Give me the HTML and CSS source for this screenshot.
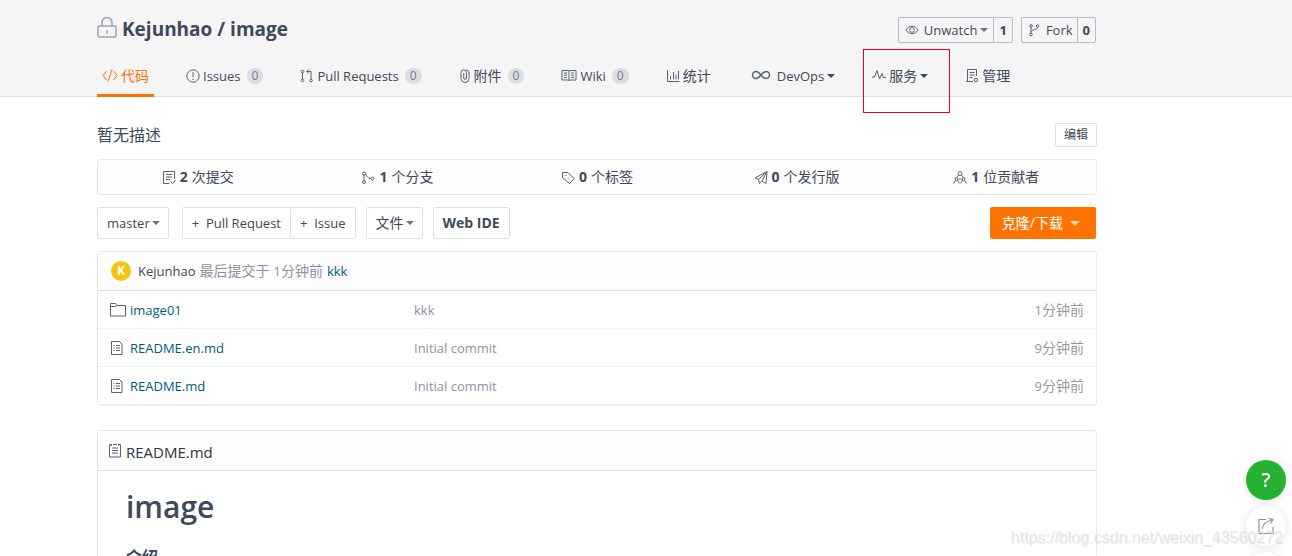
FILE: index.html
```
<!DOCTYPE html>
<html lang="zh-CN">
<head>
<meta charset="utf-8">
<title>Kejunhao / image</title>
<link rel="stylesheet" href="styles.css">
</head>
<body>
<header class="top">
  <div class="wrap">
    <div class="title-row">
      <h1 class="repo">
        <svg class="lock" viewBox="0 0 20 22"><rect x="1" y="9" width="18" height="11" rx="1.500"/><path d="M5 9V5.500a5 5 0 0 1 10 0V9M10 13v4"/></svg>
        <span><a href="#">Kejunhao</a> / <a href="#">image</a></span>
      </h1>
      <div class="actions">
        <div class="pair">
          <button class="pair-main"><svg class="ic eye" viewBox="0 0 14 14"><path d="M1 7c3-5 9-5 12 0-3 5-9 5-12 0z"/><circle cx="7" cy="7" r="2.300"/></svg>Unwatch<i class="caret"></i></button>
          <a class="pair-num" href="#">1</a>
        </div>
        <div class="pair">
          <button class="pair-main fork"><svg class="ic" viewBox="0 0 14 14"><circle cx="4" cy="3" r="1.300"/><circle cx="4" cy="11.500" r="1.300"/><circle cx="10.500" cy="3" r="1.300"/><path d="M4 4.300v6M10.500 4.300c0 3-6.500 1.500-6.500 5"/></svg>Fork</button>
          <a class="pair-num" href="#">0</a>
        </div>
      </div>
    </div>
    <nav class="tabs">
      <a class="tab active" href="#"><svg class="ic wide" viewBox="0 0 16 14"><path d="M4.500 2L1 6.500 4.500 11M11.500 2L15 6.500 11.500 11M10 .5L6 12.500"/></svg><span class="cn">代码</span></a>
      <a class="tab" href="#"><svg class="ic" viewBox="0 0 14 14"><circle cx="7" cy="7" r="6.200"/><path d="M7 3.200v5M7 9.700v1.300"/></svg>Issues<span class="badge">0</span></a>
      <a class="tab" href="#"><svg class="ic" viewBox="0 0 14 14"><circle cx="2.500" cy="2.500" r="1.300"/><circle cx="2.500" cy="11.500" r="1.300"/><circle cx="11" cy="11.500" r="1.300"/><path d="M2.500 3.800v6.400M11 10.200V2.500H7M8.700.5l-2 2 2 2"/></svg>Pull Requests<span class="badge">0</span></a>
      <a class="tab" href="#"><svg class="ic narrow" viewBox="0 0 12 14"><path d="M10 3.500v6a4 4 0 0 1-8 0V3.500a2.700 2.700 0 0 1 5.400 0V9A1.300 1.300 0 0 1 4.700 9V4M10 4a2.500 2.500 0 0 0-3-2.800"/></svg><span class="cn">附件</span><span class="badge">0</span></a>
      <a class="tab" href="#"><svg class="ic wide" viewBox="0 0 16 14"><path d="M1 1.500h6l1 .6 1-.6h6V11H9l-1 .6-1-.6H1zM8 2.100v9M3 4h3M3 6.200h3M3 8.500h3M10 4h3M10 6.200h3M10 8.500h3"/></svg>Wiki<span class="badge">0</span></a>
      <a class="tab" href="#"><svg class="ic" viewBox="0 0 14 14"><path d="M1.500 1v11.500H13.500M4.500 10.500V7M7.500 10.500V3M10 10.500V5.500M12.500 10.500V2"/></svg><span class="cn">统计</span></a>
      <a class="tab devops" href="#"><svg class="ic infinity" viewBox="0 0 20 14"><path d="M10 6C8 3.500 6.500 2.500 5 2.500a3.500 3.500 0 0 0 0 7c1.500 0 3-1 5-3.500s3.500-3.500 5-3.500a3.500 3.500 0 0 1 0 7c-1.500 0-3-1-5-3.500z"/></svg>DevOps<i class="caret"></i></a>
      <a class="tab marked" href="#"><svg class="ic" viewBox="0 0 14 14"><path d="M0 8h2.500L5 1.500 7.500 10 10 4.500l1.500 4H14"/></svg><span class="cn">服务</span><i class="caret"></i></a>
      <a class="tab" href="#"><svg class="ic" viewBox="0 0 14 14"><path d="M11.500 7V.5h-9v12H8M1 12.500h7M4.500 3.500h5M4.500 6h5M4.500 8.500h3"/><circle cx="11" cy="11" r="1.700"/></svg><span class="cn">管理</span></a>
    </nav>
  </div>
</header>
<main class="wrap">
  <div class="desc"><span>暂无描述</span><button class="btn edit">编辑</button></div>
  <div class="stats">
    <a href="#"><svg class="ic" viewBox="0 0 14 14"><path d="M12.500 9V1.500h-11v12h6M4 4.500h6M4 7h6M4 9.500h4M8.500 11.500l2 2 3-3.500"/></svg><b>2</b>次提交</a>
    <a href="#"><svg class="ic" viewBox="0 0 14 14"><circle cx="3" cy="3.500" r="1.500"/><circle cx="3" cy="12" r="1.500"/><circle cx="11.500" cy="8.500" r="1.500"/><path d="M3 5v5.500M4.500 4c1.500 3 2.500 4.500 5.500 4.500"/></svg><b>1</b>个分支</a>
    <a href="#"><svg class="ic" viewBox="0 0 14 14"><path d="M1.500 2.500h5.500l6 6L8.500 13.500l-7-6zM4.500 5.500h1"/></svg><b>0</b>个标签</a>
    <a href="#"><svg class="ic" viewBox="0 0 14 14"><path d="M13 1.500l-12 6.500 3.500 1.500zl-1 12-4-2.500L13 1.500M4.500 9.500l1 4 2-2.500"/></svg><b>0</b>个发行版</a>
    <a href="#"><svg class="ic" viewBox="0 0 14 14"><circle cx="7" cy="3.500" r="2"/><path d="M5.500 5L3.500 7.500M8.500 5l2 2.500M1 13.500c0-2 1-3 2.500-3S6 11.500 6 13.500M8 13.500c0-2 1-3 2.500-3s2.500 1 2.500 3M5.500 10L7 8.500 8.500 10"/><circle cx="3.500" cy="9" r="1.500"/><circle cx="10.500" cy="9" r="1.500"/></svg><b>1</b>位贡献者</a>
  </div>
  <div class="toolbar">
    <button class="btn">master<i class="caret"></i></button>
    <div class="group"><button class="btn">+&nbsp; Pull Request</button><button class="btn">+&nbsp; Issue</button></div>
    <button class="btn"><span class="cn">文件</span><i class="caret"></i></button>
    <button class="btn strong">Web IDE</button>
    <button class="clone">克隆/下载<i class="caret"></i></button>
  </div>
  <section class="panel">
    <div class="commit"><span class="avatar">K</span><a href="#">Kejunhao</a><span class="muted cn">最后提交于</span><span class="muted">1<span class="cn">分钟前</span></span><a class="link" href="#">kkk</a></div>
    <table class="files">
      <tr><td class="name"><a href="#"><svg class="ic wide" viewBox="0 0 16 14"><path d="M.5 13V.5h5l1.500 2h8.500V13zM1 3.500h4.500l1.500-1"/></svg>image01</a></td><td>kkk</td><td class="time">1<span class="cn">分钟前</span></td></tr>
      <tr><td class="name"><a href="#"><svg class="ic" viewBox="0 0 14 14"><path d="M1.500.5H9.500L12 3v10.500H1.500zM3.500 4.500h1M6 4.500h4M3.500 7h1M6 7h4M3.500 9.500h1M6 9.500h4"/></svg>README.en.md</a></td><td>Initial commit</td><td class="time">9<span class="cn">分钟前</span></td></tr>
      <tr><td class="name"><a href="#"><svg class="ic" viewBox="0 0 14 14"><path d="M1.500.5H9.500L12 3v10.500H1.500zM3.500 4.500h1M6 4.500h4M3.500 7h1M6 7h4M3.500 9.500h1M6 9.500h4"/></svg>README.md</a></td><td>Initial commit</td><td class="time">9<span class="cn">分钟前</span></td></tr>
    </table>
  </section>
  <section class="panel readme">
    <div class="readme-head"><svg class="ic" viewBox="0 0 14 14"><path d="M3 .5H1.500v12.500h11V.5H11M5 .5h4M3.500 0v2M10.500 0v2M4 4h6M4 6.500h6M4 9h6"/></svg>README.md</div>
    <article class="doc"><h2>image</h2><h3>介绍</h3></article>
  </section>
</main>
<aside class="float">
  <button class="round help" aria-label="帮助">?</button>
  <button class="round" aria-label="分享"><svg class="share" viewBox="0 0 18 18"><path d="M9 2.500H2v14h14V10M5 12c1-5 4-8 10-9M11.500 1.500l4.500 1-2.500 4"/></svg></button>
  <button class="round" aria-label="顶部"></button>
</aside>
<div class="watermark">https://blog.csdn.net/weixin_43560272</div>
</body>
</html>
```
FILE: styles.css
```
* { box-sizing: border-box; }
html, body { height: 100%; }
body { margin: 0; overflow: hidden; background: #fff; color: #40485b; font: 13px/20px "Open Sans", "Noto Sans CJK SC", sans-serif; }
a { color: inherit; text-decoration: none; }
button { font: inherit; color: inherit; margin: 0; cursor: pointer; }
h1, h2, h3 { margin: 0; }
.cn { font-size: 14px; }
.wrap { max-width: 1000px; margin: 0 97px; }
.top { background: #f5f5f5; border-bottom: 1px solid #dcddde; }
.title-row { display: flex; justify-content: space-between; align-items: center; padding-top: 15px; height: 44px; }
.repo { display: flex; align-items: center; gap: 5px; font-size: 19px; line-height: 26px; font-weight: 700; }
.repo span { margin-bottom: 2px; }
.lock { width: 20px; height: 22px; margin-bottom: 3px; fill: none; stroke: #9ba3b3; stroke-width: 1.5; }
.actions { display: flex; gap: 8px; margin-right: 1px; }
.pair { display: flex; height: 26px; border: 1px solid #b9bdc9; border-radius: 2px; }
.pair-main { display: flex; align-items: center; gap: 5px; padding: 0 5px 0 6px; border: 0; background: none; }
.pair-main.fork { padding: 0 4px 0 5px; }
.pair-num { padding: 2px 5px; border-left: 1px solid #b9bdc9; font-weight: 700; }
.ic { flex: none; width: 14px; height: 14px; fill: none; stroke: #596175; stroke-width: 1; }
.ic.wide { width: 16px; }
.ic.narrow { width: 12px; }
.ic.infinity { width: 20px; stroke-width: 1.5; margin-right: 3px; }
.caret { flex: none; width: 0; height: 0; border: 4px solid transparent; border-top-color: #6b7283; border-bottom: 0; }
.pair .caret { margin-left: -2px; }
.tabs { display: flex; height: 52px; gap: 27px; }
.tab { display: flex; align-items: center; gap: 3px; height: 53px; padding: 16px 5px 6px; white-space: nowrap; }
.tab .caret { border-top-color: #40485b; }
.tab.active { color: #fe7300; border-bottom: 3px solid #fe7300; padding-bottom: 3px; }
.tab.active .ic { stroke: #fe7300; }
.badge { margin-left: 3px; padding: 0 5px; border-radius: 8px; background: #dcdde0; color: #6e7b9b; font-size: 12px; line-height: 16px; }
.devops { margin-left: 3px; }
.marked { position: relative; }
.marked::after { content: ""; position: absolute; inset: 5px -17px -16px -4px; border: 1px solid #f00010; }
.desc { display: flex; justify-content: space-between; align-items: center; padding: 26px 0 12px; font-size: 16px; line-height: 24px; }
.btn { display: flex; align-items: center; gap: 2px; height: 32px; padding: 0 9px; border: 1px solid #dce3e8; border-radius: 2px; background: #fff; white-space: nowrap; }
.btn .caret { margin-right: -1px; }
.edit { height: 24px; padding: 0 8px; font-size: 12px; }
.stats { display: grid; grid-template-columns: repeat(5, 1fr); height: 36px; border: 1px solid #e3e9ed; border-radius: 3px; background: #fcfcfc; font-size: 14px; }
.stats a { display: flex; align-items: center; justify-content: center; gap: 4px; }
.toolbar { display: flex; align-items: center; margin: 12px 1px 12px 0; gap: 10px; }
.group { display: flex; margin-left: 3px; }
.group .btn { padding: 0 9px; }
.group .btn + .btn { margin-left: -1px; }
.strong { font-weight: 700; font-size: 14px; }
.clone { display: flex; align-items: center; gap: 7px; height: 32px; margin-left: auto; padding: 0 16px 0 12px; border: 0; border-radius: 2px; background: #fe7300; color: #fff; font-size: 14px; }
.clone .caret { border-width: 5px 5px 0; border-top-color: #ffd5b3; }
.panel { border: 1px solid #e3e9ed; border-radius: 3px; }
.commit { display: flex; align-items: center; gap: 4px; height: 39px; padding: 0 13px; background: #fcfcfc; border-bottom: 1px solid #dce3e8; }
.avatar { width: 20px; height: 20px; margin-right: 3px; border-radius: 50%; background: #f2c511; color: #fff; font-weight: 700; font-size: 12px; text-align: center; }
.muted, .files td { color: #8c92a4; }
.link, .files .name { color: #005980; }
.files { width: 100%; border-spacing: 0; table-layout: fixed; }
.files td { height: 38px; padding: 0 12px; border-bottom: 1px solid #f0f3f5; }
.files td.name { width: 304px; color: #005980; }
.files td.time { width: 200px; text-align: right; color: #999; }
.files a { display: flex; align-items: center; gap: 4px; }
.files .ic:not(.wide) { margin-right: 2px; }
.readme { margin-top: 24px; }
.readme-head { display: flex; align-items: center; gap: 4px; height: 40px; padding: 3px 10px 0; background: #fcfcfc; border-bottom: 1px solid #dce3e8; color: #303643; font-size: 15px; }
.readme-head .ic { margin-bottom: 3px; }
.doc { padding: 14px 28px; }
.doc h2 { font-size: 30px; line-height: 44px; font-weight: 600; }
.doc h3 { margin-top: 16px; font-size: 16px; line-height: 24px; }
.float { position: fixed; right: 6px; top: 460px; display: flex; flex-direction: column; gap: 6px; }
.round { display: flex; align-items: center; justify-content: center; width: 40px; height: 40px; padding: 0; border: 0; border-radius: 50%; background: #fff; box-shadow: 0 1px 8px rgba(0, 0, 0, .12); }
.help { background: #25b233; color: #fff; font-size: 20px; font-weight: 600; }
.share { width: 18px; height: 18px; fill: none; stroke: #8c92a4; stroke-width: 1.2; }
.watermark { position: fixed; right: 9px; bottom: 8px; color: rgba(225, 225, 225, .8); text-shadow: 1px 1px 1px rgba(0, 0, 0, .08); font: 16px/20px "Liberation Sans", sans-serif; }
```
